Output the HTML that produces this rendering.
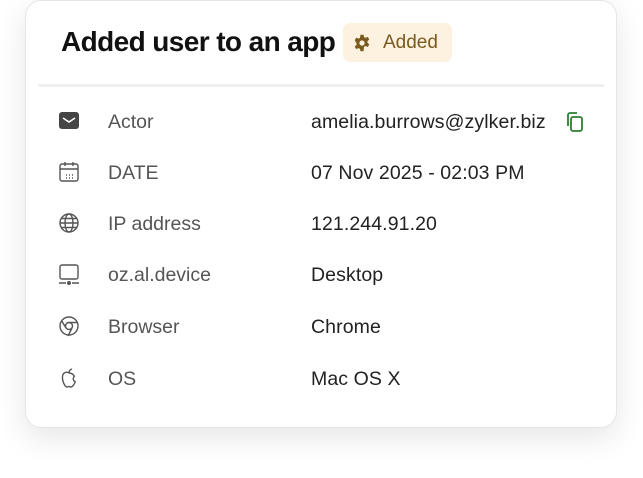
<!DOCTYPE html>
<html><head><style>
body{margin:0;width:643px;height:478px;background:#fff;font-family:"Liberation Sans",sans-serif;position:relative;overflow:hidden}
.card{position:absolute;left:25px;top:0;width:592px;height:428px;border:1px solid #e6e6e6;border-radius:16px;background:#fff;box-shadow:0 10px 30px rgba(0,0,0,0.10);box-sizing:border-box}
.title{position:absolute;left:61px;top:26px;font-size:28px;font-weight:bold;color:#111;letter-spacing:-0.6px}
.badge{position:absolute;left:343px;top:23px;width:109px;height:39px;background:#fdf2e0;border-radius:7px}
.badge span{position:absolute;left:40px;top:9px;font-size:19px;color:#7a5a1f}
.badge svg{position:absolute;left:10px;top:11px}
.div{position:absolute;left:38px;top:84px;width:566px;height:3px;background:#f0f0f0}
.row{position:absolute;left:0;width:643px;height:30px;font-size:19.5px}
.row .l{position:absolute;left:108px;top:4px;color:#555}
.row .v{position:absolute;left:311px;top:4px;color:#222;letter-spacing:0.1px}
.row svg{position:absolute;left:58px;top:3px}
</style></head><body>
<div class="card"></div>
<div class="title">Added user to an app</div>
<div class="badge"><svg width="18" height="18" viewBox="0 0 24 24"><path fill="#7a5a1f" d="M10 1h4l.7 3.2 2 1 3-1.3 2 3.4-2.4 2.2v2.2l2.4 2.2-2 3.4-3-1.3-2 1L14 23h-4l-.7-3.2-2-1-3 1.3-2-3.4 2.4-2.2v-2.2L2.3 8.3l2-3.4 3 1.3 2-1z"/><circle cx="12" cy="12" r="3.5" fill="#fdf2e0"/></svg><span>Added</span></div>
<div class="div"></div>

<div class="row" style="top:107px"><svg width="22" height="22" viewBox="0 0 22 22"><rect x="1" y="2" width="20" height="17" rx="3" fill="#444"/><path d="M5 8l6 4 6-4" stroke="#fff" stroke-width="1.6" fill="none"/></svg><span class="l">Actor</span><span class="v">amelia.burrows@zylker.biz</span>
<svg style="left:565px;top:4px" width="20" height="22" viewBox="0 0 20 22"><rect x="6" y="6" width="11" height="14" rx="2" fill="none" stroke="#2e7d32" stroke-width="1.8"/><path d="M3 15V4a2 2 0 0 1 2-2h7" fill="none" stroke="#2e7d32" stroke-width="1.8"/></svg></div>

<div class="row" style="top:158px"><svg width="22" height="22" viewBox="0 0 22 22" fill="none" stroke="#555" stroke-width="1.4"><rect x="2" y="3" width="18" height="17" rx="2"/><path d="M2 8h18M7 1v4M15 1v4"/><path d="M8 14h1M11 14h1M14 14h1M8 17h1M11 17h1M14 17h1" stroke-width="1.6"/></svg><span class="l">DATE</span><span class="v">07 Nov 2025 - 02:03 PM</span></div>

<div class="row" style="top:209px"><svg width="22" height="22" viewBox="0 0 22 22" fill="none" stroke="#555" stroke-width="1.4"><circle cx="11" cy="11" r="9"/><ellipse cx="11" cy="11" rx="4" ry="9"/><path d="M2 11h18M3.5 6.5h15M3.5 15.5h15"/></svg><span class="l">IP address</span><span class="v">121.244.91.20</span></div>

<div class="row" style="top:260px"><svg width="22" height="22" viewBox="0 0 22 22" fill="none" stroke="#555" stroke-width="1.4"><rect x="2" y="2" width="18" height="14" rx="2"/><path d="M1 20h7M14 20h7"/><circle cx="11" cy="20" r="1.3" fill="#555"/></svg><span class="l">oz.al.device</span><span class="v">Desktop</span></div>

<div class="row" style="top:312px"><svg width="22" height="22" viewBox="0 0 22 22" fill="none" stroke="#555" stroke-width="1.4"><circle cx="11" cy="11" r="9"/><circle cx="11" cy="11" r="3.5"/><path d="M11 7.5h8.5M8 13l-4.5-7.5M14 13l-4 8"/></svg><span class="l">Browser</span><span class="v">Chrome</span></div>

<div class="row" style="top:364px"><svg width="22" height="22" viewBox="0 0 22 22" fill="none" stroke="#555" stroke-width="1.4"><path d="M11 6c-2-1.5-6-1-6.5 3.5C4 14 7 20 9 20c1 0 1.3-.6 2-.6s1 .6 2 .6c1.5 0 3.5-3 4.2-5.2-2-.8-2.8-3.7-.8-5.6C15 7 13 6 11 6z"/><path d="M11 6c0-2 1-3.5 3-4"/></svg><span class="l">OS</span><span class="v">Mac OS X</span></div>
</body></html>
